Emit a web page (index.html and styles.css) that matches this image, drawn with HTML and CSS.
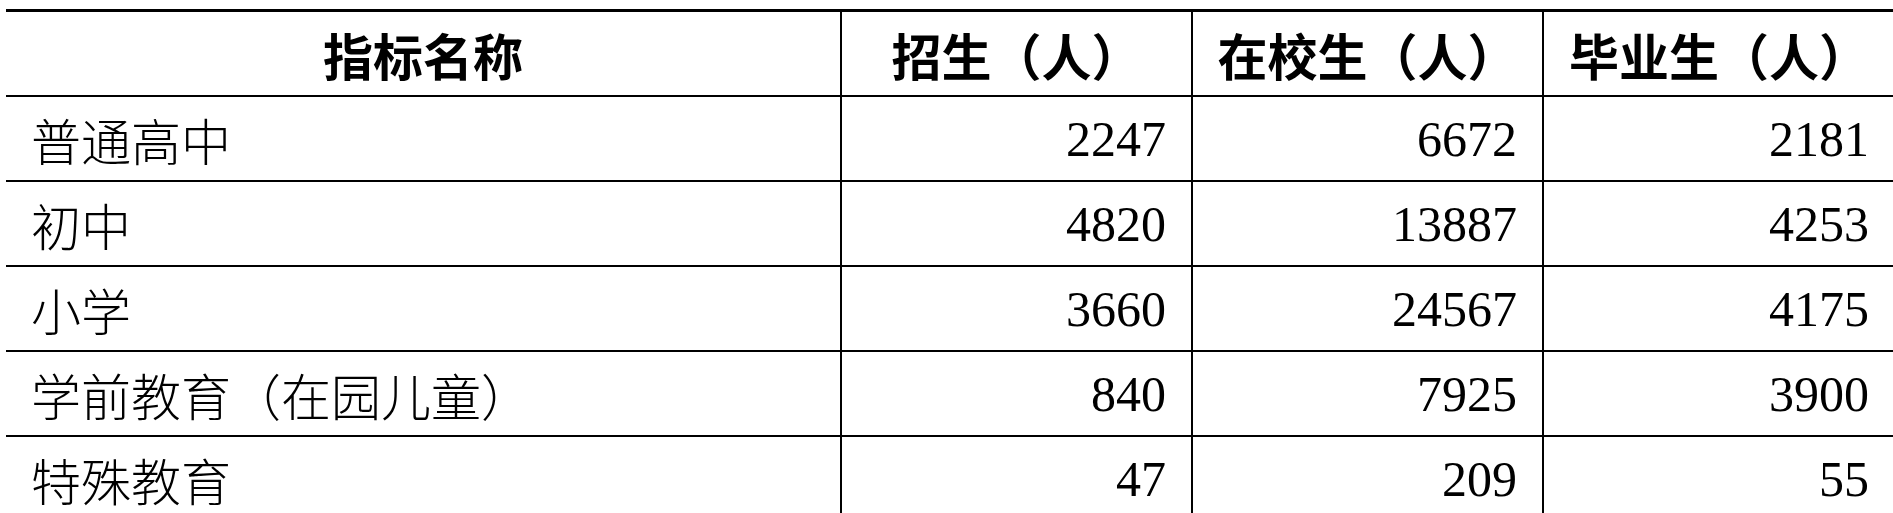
FILE: index.html
```html
<!DOCTYPE html>
<html lang="zh-CN">
<head>
<meta charset="utf-8">
<title>教育统计</title>
<link rel="stylesheet" href="styles.css">
</head>
<body>
<table class="stats">
  <colgroup>
    <col class="c-name">
    <col class="c-num">
    <col class="c-num">
    <col class="c-num">
  </colgroup>
  <thead>
    <tr>
      <th>指标名称</th>
      <th>招生（人）</th>
      <th>在校生（人）</th>
      <th>毕业生（人）</th>
    </tr>
  </thead>
  <tbody>
    <tr><td class="name">普通高中</td><td class="num">2247</td><td class="num">6672</td><td class="num">2181</td></tr>
    <tr><td class="name">初中</td><td class="num">4820</td><td class="num">13887</td><td class="num">4253</td></tr>
    <tr><td class="name">小学</td><td class="num">3660</td><td class="num">24567</td><td class="num">4175</td></tr>
    <tr><td class="name">学前教育（在园儿童）</td><td class="num">840</td><td class="num">7925</td><td class="num">3900</td></tr>
    <tr><td class="name">特殊教育</td><td class="num">47</td><td class="num">209</td><td class="num">55</td></tr>
  </tbody>
</table>
</body>
</html>
```
FILE: styles.css
```css
html, body {
  margin: 0;
  padding: 0;
  overflow: hidden;
  background: #fff;
}

.stats {
  margin: 9px 0 0 6px;
  border-collapse: collapse;
  table-layout: fixed;
  width: 1888px;
  border-top: 3px solid #000;
  color: #000;
}

.c-name { width: 835px; }
.c-num { width: 351px; }

.stats th,
.stats td {
  height: 83px;
  padding: 0 25px;
  border-bottom: 2px solid #000;
  border-left: 2px solid #000;
  vertical-align: middle;
  white-space: nowrap;
  font-size: 50px;
  line-height: 1;
}

.stats th:first-child,
.stats td:first-child {
  border-left: none;
}

.stats th {
  font-family: "Noto Sans CJK SC", sans-serif;
  font-weight: 600;
  text-align: center;
  padding: 0;
}

.name {
  font-family: "Noto Sans CJK SC", sans-serif;
  font-weight: 300;
  text-align: left;
}

.num {
  font-family: "Liberation Serif", "Noto Sans CJK SC", serif;
  text-align: right;
}
```
